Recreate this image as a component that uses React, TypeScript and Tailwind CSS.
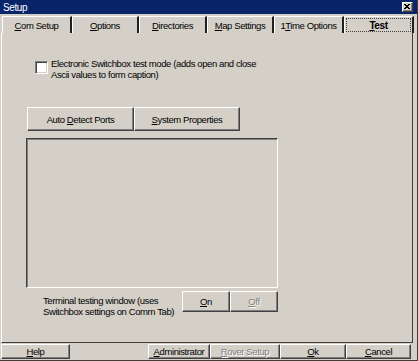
import React from "react";

const raised =
  "border border-t-white border-l-white border-r-[#404040] border-b-[#404040] shadow-[inset_-1px_-1px_0_#808080]";

const Key = ({ children }: { children: React.ReactNode }) => <span className="underline underline-offset-1">{children}</span>;

const tabs: { w: string; label: React.ReactNode; active?: boolean }[] = [
  { w: "w-[70px]", label: <><Key>C</Key>om Setup</> },
  { w: "w-[67px]", label: <><Key>O</Key>ptions</> },
  { w: "w-[68px]", label: <><Key>D</Key>irectories</> },
  { w: "w-[67px]", label: <><Key>M</Key>ap Settings</> },
  { w: "w-[70px]", label: <>1<Key>T</Key>ime Options</> },
  { w: "w-[70px]", label: <><Key>T</Key>est</>, active: true },
];

const Btn = ({ label, cls, disabled }: { label: React.ReactNode; cls: string; disabled?: boolean }) => (
  <div
    className={`${cls} ${raised} bg-[#d4d0c8] flex items-center justify-center ${
      disabled ? "text-[#808080] [text-shadow:1px_1px_0_#fff]" : "text-black"
    }`}
  >
    <span className="whitespace-nowrap">{label}</span>
  </div>
);

export default function App() {
  return (
    <div className="w-[418px] h-[361px] bg-[#d4d0c8] flex flex-col text-[9.5px] leading-[11px] tracking-[-0.4px] text-black border-r border-b border-r-[#404040] border-b-[#404040] overflow-hidden [font-family:'Liberation_Sans',Arial,sans-serif]">
      {/* title bar */}
      <div className="h-[14px] bg-[#0a246a] flex items-center justify-between pl-[3px] pr-[4px]">
        <span className="text-white text-[10px]">Setup</span>
        <div className={`w-[11px] h-[10px] ${raised} bg-[#d4d0c8] flex items-center justify-center`}>
          <svg width="7" height="6" viewBox="0 0 7 6">
            <path d="M1 0 L6 5 M0 0 L5 5 M5 0 L0 5 M6 0 L1 5" stroke="#000" strokeWidth="1" />
          </svg>
        </div>
      </div>

      {/* tabs */}
      <div className="flex pl-[2px] mt-[2px] h-[17px]">
        {tabs.map((t, i) => (
          <div
            key={i}
            className={`${t.w} h-full border-t border-t-white border-l border-l-white border-r-2 border-r-[#202020] bg-[#d4d0c8] flex items-center justify-center p-[1px] ${
              t.active ? "font-bold text-[10px]" : ""
            }`}
          >
            {t.active ? (
              <div className="w-full h-full border border-dotted border-[#404040] flex items-center justify-center">
                <span className="whitespace-nowrap">{t.label}</span>
              </div>
            ) : (
              <span className="whitespace-nowrap">{t.label}</span>
            )}
          </div>
        ))}
      </div>

      {/* panel */}
      <div className="w-[412px] h-[310px] ml-[1px] border-l border-l-white border-r border-r-[#404040] border-b border-b-[#404040] flex flex-col">
        <div className="flex items-start mt-[23px] ml-[33px] gap-[3px]">
          <div className="w-[13px] h-[13px] mt-[5px] bg-white border border-t-[#808080] border-l-[#808080] border-r-white border-b-white shadow-[inset_1px_1px_0_#404040,inset_-1px_-1px_0_#d4d0c8]" />
          <div className="pt-[2px] whitespace-nowrap">
            Electronic Switchbox test mode (adds open and close
            <br />
            Ascii values to form caption)
          </div>
        </div>

        <div className="flex ml-[25px] mt-[27px]">
          <Btn cls="w-[107px] h-[24px]" label={<>Auto <Key>D</Key>etect Ports</>} />
          <Btn cls="w-[106px] h-[24px]" label={<><Key>S</Key>ystem Properties</>} />
        </div>

        <div className="ml-[24px] mt-[7px] w-[252px] h-[150px] border border-t-[#404040] border-l-[#404040] border-r-white border-b-white shadow-[inset_1px_1px_0_#808080]" />

        <div className="flex ml-[41px] mt-[3px]">
          <div className="w-[139px] pt-[4px] whitespace-nowrap">
            Terminal testing window (uses
            <br />
            Switchbox settings on Comm Tab)
          </div>
          <Btn cls="w-[48px] h-[21px]" label={<><Key>O</Key>n</>} />
          <Btn cls="w-[48px] h-[21px]" disabled label={<><Key>O</Key>ff</>} />
        </div>
      </div>

      {/* bottom buttons */}
      <div className="flex mt-[1px] ml-[1px] h-[15px]">
        <Btn cls="w-[69px] h-full" label={<><Key>H</Key>elp</>} />
        <div className="w-[78px]" />
        <Btn cls="w-[62px] h-full" label={<><Key>A</Key>dministrator</>} />
        <Btn cls="w-[70px] h-full" disabled label={<><Key>R</Key>over Setup</>} />
        <Btn cls="w-[66px] h-full" label={<><Key>O</Key>k</>} />
        <Btn cls="w-[65px] h-full" label={<><Key>C</Key>ancel</>} />
      </div>
    </div>
  );
}
